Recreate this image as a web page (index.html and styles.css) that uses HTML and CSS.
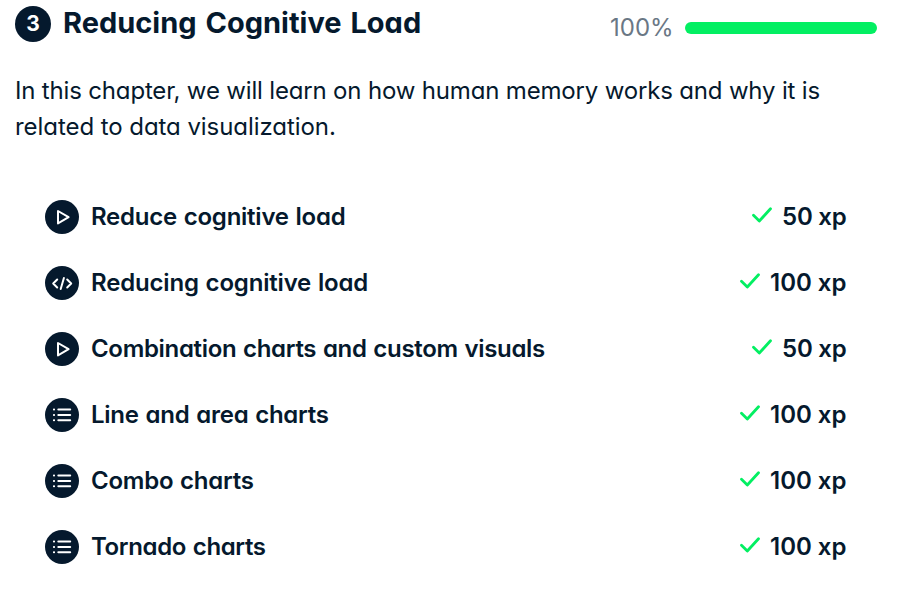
FILE: index.html
```html
<!DOCTYPE html>
<html lang="en">
<head>
<meta charset="utf-8">
<title>Reducing Cognitive Load</title>
<link rel="stylesheet" href="styles.css">
</head>
<body>
<svg class="sprite" aria-hidden="true">
  <symbol id="play" viewBox="0 0 34 34"><path d="M13 11v12.400l10.600-6.200z"/></symbol>
  <symbol id="code" viewBox="0 0 34 34"><path d="M12.200 13.500 8.200 17.500l4 4M22.200 13.500l4 4-4 4M18.900 11.900l-3.200 11.200"/></symbol>
  <symbol id="list" viewBox="0 0 34 34"><path d="M13.300 11.600h11.900M13.300 17h11.900M13.300 22.300h11.900M8.900 11.600h.2M8.900 17h.2M8.900 22.300h.2"/></symbol>
  <symbol id="check" viewBox="0 0 20 16"><path d="M1.500 8.300 7.300 14 18.500 1.800"/></symbol>
</svg>
<main class="chapter">
  <header class="chapter-header">
    <span class="number">3</span>
    <h1 class="title">Reducing Cognitive Load</h1>
    <div class="progress"><span class="percent">100%</span><span class="bar"></span></div>
  </header>
  <p class="description"><span class="line-one">In this chapter, we will learn on how human memory works and why it is</span><br><span class="line-two">related to data visualization.</span></p>
  <ul class="exercises">
    <li class="exercise"><svg class="icon"><use href="#play"/></svg><span class="name reduce">Reduce cognitive load</span><svg class="check"><use href="#check"/></svg><span class="xp fifty">50 xp</span></li>
    <li class="exercise"><svg class="icon"><use href="#code"/></svg><span class="name reducing">Reducing cognitive load</span><svg class="check"><use href="#check"/></svg><span class="xp">100 xp</span></li>
    <li class="exercise"><svg class="icon"><use href="#play"/></svg><span class="name combination">Combination charts and custom visuals</span><svg class="check"><use href="#check"/></svg><span class="xp fifty">50 xp</span></li>
    <li class="exercise"><svg class="icon"><use href="#list"/></svg><span class="name line">Line and area charts</span><svg class="check"><use href="#check"/></svg><span class="xp">100 xp</span></li>
    <li class="exercise"><svg class="icon"><use href="#list"/></svg><span class="name combo">Combo charts</span><svg class="check"><use href="#check"/></svg><span class="xp">100 xp</span></li>
    <li class="exercise"><svg class="icon"><use href="#list"/></svg><span class="name tornado">Tornado charts</span><svg class="check"><use href="#check"/></svg><span class="xp">100 xp</span></li>
  </ul>
</main>
</body>
</html>
```
FILE: styles.css
```css
* { box-sizing: border-box; }
body {
  margin: 0;
  background: #fff;
  color: #05192d;
  font-family: Inter, "Liberation Sans", sans-serif;
  font-feature-settings: "cv11";
}
.sprite { display: none; }
.chapter { padding: 5px 22px 0 15px; }
.chapter-header { display: flex; align-items: center; height: 37px; }
.number {
  width: 36px; height: 36px; margin-top: 1px;
  border-radius: 50%;
  background: #05192d; color: #fff;
  font-size: 21px; font-weight: 700; line-height: 36px; text-align: center;
}
.title { margin: -2px 0 0 12px; font-size: 29px; font-weight: 700; line-height: 36px; word-spacing: 2px; white-space: nowrap; }
.progress { display: flex; align-items: center; margin: 9px 0 0 auto; }
.percent { width: 62px; margin-right: 13px; color: #6a7785; font-size: 24px; line-height: 30px; white-space: nowrap; }
.bar { width: 192px; height: 12px; border-radius: 6px; background: #03ef62; }
.description { margin: 31px 0 0; font-size: 24px; line-height: 36px; white-space: nowrap; }
.line-one { letter-spacing: -.17px; }
.line-two { letter-spacing: -.06px; }
.exercises { margin: 39px 0 0; padding: 0 30px; list-style: none; }
.exercise { display: flex; align-items: center; height: 66px; font-size: 24px; font-weight: 600; line-height: 36px; white-space: nowrap; }
.name { word-spacing: 1px; }
.reduce { letter-spacing: -.24px; }
.reducing { letter-spacing: -.18px; }
.combination { letter-spacing: -.32px; }
.line { letter-spacing: -.25px; }
.combo { letter-spacing: -.25px; }
.tornado { letter-spacing: -.36px; }
.icon { width: 34px; height: 34px; margin-right: 12px; border-radius: 50%; background: #05192d; fill: none; stroke: #fff; stroke-width: 2; stroke-linecap: round; stroke-linejoin: round; }
.check { width: 20px; height: 16px; margin: 0 10px 5px auto; fill: none; stroke: #03ef62; stroke-width: 2.800; stroke-linecap: round; stroke-linejoin: round; }
.xp { width: 77px; }
.fifty { width: 65px; letter-spacing: -.2px; }
```
